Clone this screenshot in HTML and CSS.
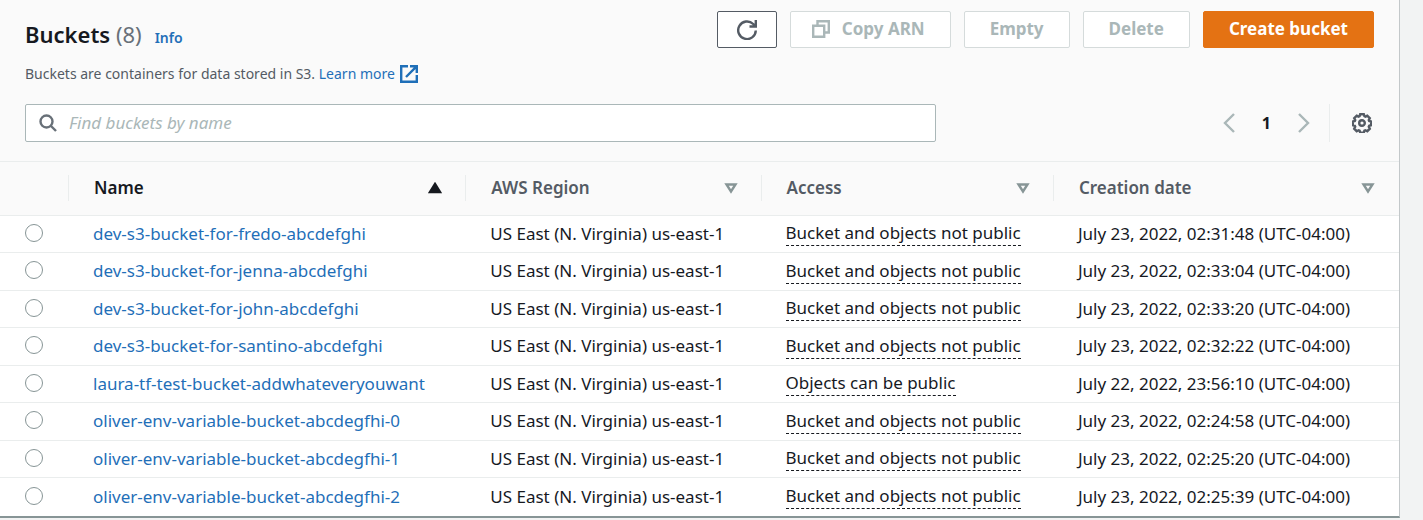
FILE: index.html
```html
<!DOCTYPE html>
<html lang="en">
<head>
<meta charset="utf-8">
<meta name="viewport" content="width=device-width, initial-scale=1">
<title>Buckets</title>
<link rel="stylesheet" href="styles.css">
</head>
<body>
<main class="card">
  <header class="card-header">
    <div class="heading-row">
      <div class="heading">
        <div class="title-line">
          <h1 class="title">Buckets <span class="count">(8)</span></h1>
          <a class="link info" href="#info">Info</a>
        </div>
        <p class="description">Buckets are containers for data stored in S3.
          <a class="link learn" href="#learn">Learn more<svg class="external" viewBox="0 0 18 18" aria-hidden="true"><path d="M8 1.200H1.200v15.600h15.600V10M10 1.200h6.800V8M16.800 1.200L6 12"/></svg></a></p>
      </div>
      <div class="actions">
        <button class="btn btn-refresh" type="button" aria-label="Refresh"><svg class="icon-refresh" viewBox="0 0 20 20" aria-hidden="true"><path d="M18.800 10.500A8.800 8.800 0 1 1 16.200 4L18.500 6.300M18.800 0V6.500H12.500"/></svg></button>
        <button class="btn btn-copy" type="button" disabled><svg class="icon-copy" viewBox="0 0 18 18" aria-hidden="true"><path d="M1.200 5.700h11v11h-11zM5.500 5.500V1.200h11.300v11.300h-4.500"/></svg>Copy ARN</button>
        <button class="btn" type="button" disabled>Empty</button>
        <button class="btn" type="button" disabled>Delete</button>
        <button class="btn btn-primary" type="button">Create bucket</button>
      </div>
    </div>
    <div class="tools">
      <label class="search">
        <svg class="icon-search" viewBox="0 0 18 18" aria-hidden="true"><circle cx="7.500" cy="7.500" r="6"/><path d="M12 12l5 5"/></svg>
        <input class="search-input" type="search" placeholder="Find buckets by name" aria-label="Find buckets by name">
      </label>
      <div class="paging">
        <button class="icon-btn" type="button" aria-label="Previous page" disabled><svg class="icon-chevron" viewBox="0 0 12 20" aria-hidden="true"><path d="M11 1L2 10l9 9"/></svg></button>
        <button class="page" type="button" aria-current="page">1</button>
        <button class="icon-btn" type="button" aria-label="Next page" disabled><svg class="icon-chevron" viewBox="0 0 12 20" aria-hidden="true"><path d="M1 1l9 9-9 9"/></svg></button>
        <span class="divider"></span>
        <button class="icon-btn" type="button" aria-label="Preferences"><svg class="icon-gear" viewBox="0 0 20 20" aria-hidden="true"><path d="M8.200 1.200h3.600l.6 2 1 .4 1.900-1 2.500 2.500-1 1.900.4 1 2 .6v3.600l-2 .6-.4 1 1 1.900-2.500 2.500-1.900-1-1 .4-.6 2H8.200l-.6-2-1-.4-1.900 1-2.500-2.500 1-1.900-.4-1-2-.6V8.600l2-.6.4-1-1-1.900 2.500-2.500 1.900 1 1-.4z"/><circle cx="10" cy="10" r="2.800"/></svg></button>
      </div>
    </div>
  </header>
  <table class="table">
    <colgroup><col class="col-select"><col class="col-name"><col class="col-region"><col class="col-access"><col></colgroup>
    <thead>
      <tr>
        <th scope="col" aria-label="Selection"></th>
        <th scope="col" aria-sort="ascending"><div class="th sorted">Name<svg class="sort" viewBox="0 0 14 12" aria-hidden="true"><path d="M7 2l5 8H2z"/></svg></div></th>
        <th scope="col"><div class="th">AWS Region<svg class="sort" viewBox="0 0 14 12" aria-hidden="true"><path d="M2.500 2.500h9L7 9.500z"/></svg></div></th>
        <th scope="col"><div class="th">Access<svg class="sort" viewBox="0 0 14 12" aria-hidden="true"><path d="M2.500 2.500h9L7 9.500z"/></svg></div></th>
        <th scope="col"><div class="th">Creation date<svg class="sort" viewBox="0 0 14 12" aria-hidden="true"><path d="M2.500 2.500h9L7 9.500z"/></svg></div></th>
      </tr>
    </thead>
    <tbody>
      <tr><td><input class="radio" type="radio" name="bucket" aria-label="dev-s3-bucket-for-fredo-abcdefghi"></td><td><a class="link" href="#b1">dev-s3-bucket-for-fredo-abcdefghi</a></td><td>US East (N. Virginia) us-east-1</td><td><span class="access">Bucket and objects not public</span></td><td>July 23, 2022, 02:31:48 (UTC-04:00)</td></tr>
      <tr><td><input class="radio" type="radio" name="bucket" aria-label="dev-s3-bucket-for-jenna-abcdefghi"></td><td><a class="link" href="#b2">dev-s3-bucket-for-jenna-abcdefghi</a></td><td>US East (N. Virginia) us-east-1</td><td><span class="access">Bucket and objects not public</span></td><td>July 23, 2022, 02:33:04 (UTC-04:00)</td></tr>
      <tr><td><input class="radio" type="radio" name="bucket" aria-label="dev-s3-bucket-for-john-abcdefghi"></td><td><a class="link" href="#b3">dev-s3-bucket-for-john-abcdefghi</a></td><td>US East (N. Virginia) us-east-1</td><td><span class="access">Bucket and objects not public</span></td><td>July 23, 2022, 02:33:20 (UTC-04:00)</td></tr>
      <tr><td><input class="radio" type="radio" name="bucket" aria-label="dev-s3-bucket-for-santino-abcdefghi"></td><td><a class="link" href="#b4">dev-s3-bucket-for-santino-abcdefghi</a></td><td>US East (N. Virginia) us-east-1</td><td><span class="access">Bucket and objects not public</span></td><td>July 23, 2022, 02:32:22 (UTC-04:00)</td></tr>
      <tr><td><input class="radio" type="radio" name="bucket" aria-label="laura-tf-test-bucket-addwhateveryouwant"></td><td><a class="link" href="#b5">laura-tf-test-bucket-addwhateveryouwant</a></td><td>US East (N. Virginia) us-east-1</td><td><span class="access">Objects can be public</span></td><td>July 22, 2022, 23:56:10 (UTC-04:00)</td></tr>
      <tr><td><input class="radio" type="radio" name="bucket" aria-label="oliver-env-variable-bucket-abcdegfhi-0"></td><td><a class="link" href="#b6">oliver-env-variable-bucket-abcdegfhi-0</a></td><td>US East (N. Virginia) us-east-1</td><td><span class="access">Bucket and objects not public</span></td><td>July 23, 2022, 02:24:58 (UTC-04:00)</td></tr>
      <tr><td><input class="radio" type="radio" name="bucket" aria-label="oliver-env-variable-bucket-abcdegfhi-1"></td><td><a class="link" href="#b7">oliver-env-variable-bucket-abcdegfhi-1</a></td><td>US East (N. Virginia) us-east-1</td><td><span class="access">Bucket and objects not public</span></td><td>July 23, 2022, 02:25:20 (UTC-04:00)</td></tr>
      <tr><td><input class="radio" type="radio" name="bucket" aria-label="oliver-env-variable-bucket-abcdegfhi-2"></td><td><a class="link" href="#b8">oliver-env-variable-bucket-abcdegfhi-2</a></td><td>US East (N. Virginia) us-east-1</td><td><span class="access">Bucket and objects not public</span></td><td>July 23, 2022, 02:25:39 (UTC-04:00)</td></tr>
    </tbody>
  </table>
</main>
</body>
</html>
```
FILE: styles.css
```css
* { box-sizing: border-box; }
body {
  margin: 0;
  background: #f2f3f3;
  color: #16191f;
  font: 17px/24px "Noto Sans", "Open Sans", sans-serif;
}
button, input { font: inherit; }
svg { fill: none; stroke: currentColor; stroke-width: 2.4; flex: none; }
.card {
  margin-right: 23px;
  background: #fff;
  border-right: 1px solid #c3c8ca;
  border-bottom: 2px solid #879596;
}
.card-header {
  padding: 11px 25px 19px;
  background: #fafafa;
  border-bottom: 1px solid #eaeded;
}
.heading-row { display: flex; justify-content: space-between; }
.heading { padding-top: 7px; }
.title-line { display: flex; align-items: baseline; gap: 13px; }
.title { margin: 0; font-size: 22px; line-height: 32px; font-weight: 600; }
.count { font-weight: 400; color: #687078; }
.link { color: #1f6fb8; text-decoration: none; }
.link:hover { text-decoration: underline; }
.info { font-size: 14px; font-weight: 600; }
.description { margin: 13px 0 0; font-size: 14px; line-height: 22px; color: #545b64; }
.learn { display: inline-flex; align-items: center; gap: 5px; }
.external { width: 18px; height: 18px; }
.actions { display: flex; align-items: flex-start; gap: 13px; }
.btn {
  display: inline-flex;
  align-items: center;
  gap: 12px;
  height: 37px;
  padding: 0 25px 2px;
  border: 1px solid #545b64;
  border-radius: 2px;
  background: #fff;
  color: #545b64;
  font-weight: 700;
  white-space: nowrap;
}
.btn:disabled { border-color: #d5dbdb; color: #aab7b8; }
.btn-refresh { padding: 0 19px; }
.btn-copy { padding-left: 21px; }
.btn-primary { border-color: #e47213; background: #e47213; color: #fff; }
.icon-refresh { width: 20px; height: 20px; }
.icon-copy { width: 18px; height: 18px; }
.tools { display: flex; align-items: center; justify-content: space-between; margin-top: 19px; }
.search {
  display: flex;
  align-items: center;
  gap: 12px;
  width: 67.5%;
  height: 38px;
  padding: 0 13px;
  border: 1px solid #aab7b8;
  border-radius: 2px;
  background: #fff;
}
.icon-search { width: 18px; height: 18px; color: #687078; }
.search-input { flex: 1; min-width: 0; padding: 0; border: 0; outline: 0; background: none; color: inherit; }
.search-input::placeholder { color: #aab7b8; font-style: italic; opacity: 1; }
.paging { display: flex; align-items: center; }
.icon-btn, .page { display: flex; padding: 0; border: 0; background: none; color: #545b64; }
.icon-btn:disabled { color: #aab7b8; }
.page { padding: 0 27px; color: #16191f; font-size: 16px; font-weight: 700; }
.icon-chevron { width: 12px; height: 20px; }
.divider { width: 1px; height: 38px; margin: 0 22px 0 19px; background: #eaeded; }
.icon-gear { width: 20px; height: 20px; margin-right: 2px; }
.table { width: 100%; table-layout: fixed; border-collapse: separate; border-spacing: 0; }
.col-select { width: 69px; }
.col-name { width: 28.4%; }
.col-region { width: 21.1%; }
.col-access { width: 20.9%; }
th { height: 54px; padding: 0 0 1px; background: #fafafa; border-bottom: 1px solid #eaeded; text-align: left; }
.th {
  display: flex;
  align-items: center;
  justify-content: space-between;
  height: 26px;
  padding: 0 24px 0 25px;
  color: #545b64;
  font-weight: 600;
}
th + th .th { border-left: 1px solid #eaeded; margin-left: -1px; }
.sorted { color: #16191f; }
.sort { width: 14px; height: 12px; color: #879596; }
.sorted .sort { color: #16191f; fill: currentColor; }
td { height: 37px; padding: 0 0 1px 24px; border-bottom: 1px solid #eaeded; white-space: nowrap; }
tr:nth-child(even) td { height: 38px; }
tr:last-child td { border-bottom: 0; }
.radio {
  display: block;
  width: 18px;
  height: 18px;
  margin: 0 0 2px 1px;
  appearance: none;
  border: 1px solid #879596;
  border-radius: 50%;
  background: #fff;
}
.radio:checked { border: 5px solid #1f6fb8; }
.access { display: inline-block; line-height: 24px; border-bottom: 1px dashed #16191f; }
```
